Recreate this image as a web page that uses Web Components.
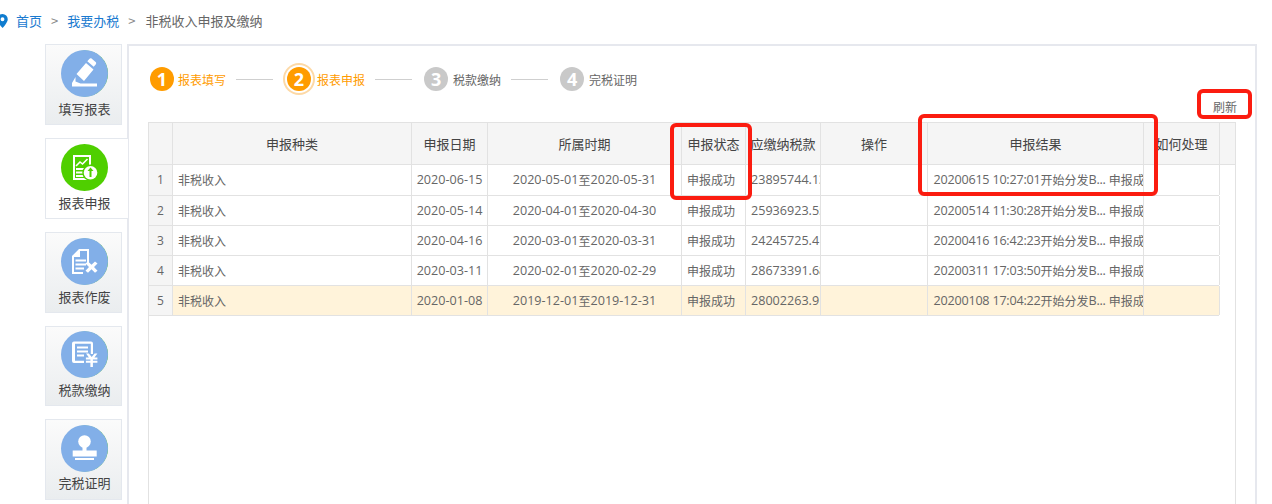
<!DOCTYPE html>
<html><head><meta charset="utf-8">
<style>
html,body{margin:0;padding:0;background:#fff;overflow:hidden}
body{width:1272px;height:504px;font-family:"Open Sans","Noto Sans CJK SC",sans-serif;font-size:12px;color:#666}
</style></head><body>
<tax-page></tax-page>
<script>
const FONT='"Noto Sans CJK SC","Microsoft YaHei",sans-serif';
class TaxCrumb extends HTMLElement{connectedCallback(){this.attachShadow({mode:'open'}).innerHTML=`<style>
:host{display:flex;align-items:center;height:44px;box-sizing:border-box;padding-bottom:3px;font:13px ${FONT};color:#666;margin-left:-3px}
svg{width:11px;height:14px;margin-right:8px;flex:none}
a{color:#1a7ad0}i{font-style:normal;color:#888;margin:0 9px}
i+a+i{margin-right:10px}
</style><svg viewBox="0 0 12 16"><path fill="#0f7ccf" d="M6 0a6 6 0 0 0-6 6c0 4 6 10 6 10s6-6 6-10a6 6 0 0 0-6-6zm0 8.200a2.200 2.200 0 1 1 0-4.400 2.200 2.200 0 0 1 0 4.400z"/></svg><a>首页</a><i>&gt;</i><a>我要办税</a><i>&gt;</i><span>非税收入申报及缴纳</span>`}}
customElements.define('tax-crumb',TaxCrumb);

const ICONS={
pen:`<path fill="#fff" d="M15.500 24L25 13 32.500 19.500 23 31zM26.300 11.200l2-2.300c.8-.8 1.800-.8 2.500-.2l3.800 3.300c.7.600.8 1.600.1 2.400l-2 2.300zM14.500 27v4.500L19.500 33.500H36V36.500H11V33z"/>`,
chart:`<g fill="none" stroke="#fff"><rect x="13" y="12" width="16" height="23" stroke-width="2"/><path stroke-width="1.600" d="M15 22l4-4 2.500 2 5-5"/></g><path fill="#fff" d="M15 24h12v2H15zm0 3.500h9v2h-9zm0 3.500h9v2h-9z"/><circle cx="29.500" cy="28.700" r="8.200" fill="#4fcf00"/><circle cx="29.500" cy="28.700" r="6.800" fill="#fff"/><path fill="#4fcf00" d="M29.500 23.500l3 3.500h-2v6h-2v-6h-2z"/>`,
cancel:`<path fill="#fff" fill-rule="evenodd" d="M18 11h10v14h-2V13h-7v6h-6v15h9v2H11V18zM14.500 21.500H25v2H14.500zm0 4H25v2H14.500zm0 4H23v2h-8.500z"/><path fill="#fff" d="M24.500 25.500l2.500-2 3.500 3.200 3.500-3.200 2.500 2-3.500 3.500 3.500 3.700-2.500 2-3.500-3.500-3.500 3.500-2.500-2 3.500-3.700z"/>`,
yen:`<path fill="#fff" fill-rule="evenodd" d="M13 10.500h17a2 2 0 0 1 2 2V23h-2.200V12.700H14v17h9V32H13a2 2 0 0 1-2-2V12.500a2 2 0 0 1 2-2z"/><path fill="#fff" d="M16 15.500h11v2H16zm0 4h11v2H16zm0 4h7v2h-7zM25 22.500h2.800l2.900 3.500 2.900-3.500h2.800l-3 4h3v2h-4.500v1.200h4.500v2h-4.500V36h-2.500v-4.300h-4.500v-2h4.500v-1.200h-4.500v-2h3z"/>`,
stamp:`<circle cx="23.500" cy="16.500" r="6.300" fill="#fff"/><path fill="#fff" d="M21.500 21h4v5h-4zM11.700 25.500h24v6h-24zM14 33h19v2H14z"/>`};
class TaxTab extends HTMLElement{connectedCallback(){const on=this.hasAttribute('active'),p=this.getAttribute('pad')||5,g=this.getAttribute('gap')||3;this.attachShadow({mode:'open'}).innerHTML=`<style>
:host{display:block;box-sizing:border-box;width:${on?'83px':'77px'};height:${this.getAttribute('h')||81}px;border:1px solid #e4e8ee;${on?'border-right:0;background:#fff;':'background:linear-gradient(#fbfbfb,#eaedef);'}text-align:center;font:13px/18px ${FONT};color:#444;padding-top:${p}px;flex:none;position:relative;z-index:1}
svg{display:block;width:48px;height:47px;margin:0 0 ${g}px 15px}
</style><svg viewBox="0 0 48 47">${on?'':'<circle cx="24" cy="23.500" r="23" fill="#4fcf00"/>'}<circle cx="23.500" cy="23.500" r="23.500" fill="${on?'#4fcf00':'#82afe8'}"/>${ICONS[this.getAttribute('icon')]}</svg><div style="width:77px"><slot></slot></div>`}}
customElements.define('tax-tab',TaxTab);

class TaxStep extends HTMLElement{connectedCallback(){const s=this.getAttribute('state'),on=s!=='todo',cur=s==='current';this.attachShadow({mode:'open'}).innerHTML=`<style>
:host{display:flex;align-items:center;height:24px;font:12px ${FONT};color:${on?'#ff9c00':'#666'}}
b{display:flex;align-items:center;justify-content:center;width:24px;height:24px;border-radius:50%;background:${on?'#ff9c00':'#c9c9c9'};color:#fff;font:bold 18px "Open Sans",sans-serif;${cur?'box-shadow:0 0 0 2px #fff,0 0 0 4px #fdd9a6;':''}margin-right:${this.getAttribute('gap')||5}px;flex:none}
</style><b>${this.getAttribute('n')}</b><slot></slot>`}}
customElements.define('tax-step',TaxStep);

const COLS=[24,239,76,194,64,75,107,216,76,17];
const HEAD=['','申报种类','申报日期','所属时期','申报状态','应缴纳税款','操作','申报结果','如何处理',''];
const ROWS=[
['1','非税收入','2020-06-15','2020-05-01至2020-05-31','申报成功','23895744.13','','20200615 10:27:01开始分发B... 申报成功',''],
['2','非税收入','2020-05-14','2020-04-01至2020-04-30','申报成功','25936923.55','','20200514 11:30:28开始分发B... 申报成功',''],
['3','非税收入','2020-04-16','2020-03-01至2020-03-31','申报成功','24245725.41','','20200416 16:42:23开始分发B... 申报成功',''],
['4','非税收入','2020-03-11','2020-02-01至2020-02-29','申报成功','28673391.68','','20200311 17:03:50开始分发B... 申报成功',''],
['5','非税收入','2020-01-08','2019-12-01至2019-12-31','申报成功','28002263.9','','20200108 17:04:22开始分发B... 申报成功','']];
const ALIGN=['ctr','lft','ctr','ctr','lft','lft','ctr','lft res','ctr'];
const cjk=t=>t.replace(/[\u4e00-\u9fff]+/g,m=>`<span class="z">${m}</span>`);
class TaxGrid extends HTMLElement{connectedCallback(){
const tpl=COLS.map(w=>w+'px').join(' ');
const head=HEAD.map(t=>`<div class="c">${t}</div>`).join('');
const rows=ROWS.map((r,ri)=>`<div class="r ${ri==4?'hl':''} ${ri==0?'first':''}">`+r.map((t,i)=>`<div class="c ${i==0?'n':''} ${ALIGN[i]}">${cjk(t)}</div>`).join('')+`</div>`).join('');
this.attachShadow({mode:'open'}).innerHTML=`<style>
:host{display:block;width:1088px;box-sizing:border-box;border:solid #e2e2e2;border-width:1px 1px 0 1px;height:382px;font:12.600px "Open Sans","Noto Sans CJK SC",sans-serif;color:#666}
.hd{display:grid;grid-template-columns:${tpl};height:41px;background:#f5f5f5;border-bottom:1px solid #e2e2e2;font:13px ${FONT};color:#444}
.r{display:grid;grid-template-columns:${COLS.slice(0,-1).map(w=>w+'px').join(' ')};height:30px;box-sizing:border-box;border-bottom:1px solid #e2e2e2;width:1070px}
.r.first{height:31px}
.c{box-sizing:border-box;border-right:1px solid #e2e2e2;display:flex;align-items:center;overflow:hidden;white-space:pre;min-width:0}
.hd .c{justify-content:center}
.hd .c:last-child{border-right:0}
.r .c{padding-bottom:1px}
.r .lft{justify-content:flex-start;padding-left:5px}
.r .res{letter-spacing:-.22px;padding-left:5.500px}
.r .ctr{justify-content:center}
.r .n{background:#f5f5f5;font-size:12px}
.z{font:12px ${FONT};letter-spacing:0}
.hl .c:not(.n){background:#fff3da}
</style><div class="hd">${head}</div>${rows}`}}
customElements.define('tax-grid',TaxGrid);

class TaxMark extends HTMLElement{connectedCallback(){const[x,y,w,h]=this.getAttribute('box').split(',');this.attachShadow({mode:'open'}).innerHTML=`<style>
:host{position:absolute;left:${x}px;top:${y}px;width:${w}px;height:${h}px;box-sizing:border-box;border:4px solid #fb1c10;border-radius:6px;z-index:5;pointer-events:none}
</style>`}}
customElements.define('tax-mark',TaxMark);

class TaxPanel extends HTMLElement{connectedCallback(){this.attachShadow({mode:'open'}).innerHTML=`<style>
:host{display:block;box-sizing:border-box;width:1130px;height:460px;border:solid #e6e8ee;border-width:2px 2px 0 2px;margin-left:-1px;padding:21px 0 0 19px;flex:none}
.steps{display:flex;align-items:center;height:24px;padding-left:2px}
.line{width:37px;height:1px;background:#cfcfcf;margin:0 12px 0 10px}
.line.w{margin-right:14px}
.bar{display:flex;justify-content:flex-end;align-items:center;height:31px;padding-right:18px;font:12px ${FONT};color:#666}
</style><div class="steps"><tax-step n="1" state="done" gap="4">报表填写</tax-step><div class="line w"></div><tax-step n="2" state="current" gap="6">报表申报</tax-step><div class="line"></div><tax-step n="3" state="todo">税款缴纳</tax-step><div class="line"></div><tax-step n="4" state="todo">完税证明</tax-step></div><div class="bar"><span>刷新</span></div><tax-grid></tax-grid>`}}
customElements.define('tax-panel',TaxPanel);

class TaxPage extends HTMLElement{connectedCallback(){this.attachShadow({mode:'open'}).innerHTML=`<style>
:host{display:block;position:relative;width:1272px;height:504px;overflow:hidden}
.main{display:flex;padding-left:45px}
.side{display:flex;flex-direction:column;gap:13px;width:83px;flex:none}
</style><tax-crumb></tax-crumb><div class="main"><div class="side"><tax-tab icon="pen">填写报表</tax-tab><tax-tab icon="chart" active>报表申报</tax-tab><tax-tab icon="cancel">报表作废</tax-tab><tax-tab icon="yen" h="80" pad="4">税款缴纳</tax-tab><tax-tab icon="stamp" gap="2">完税证明</tax-tab></div><tax-panel></tax-panel></div>
<tax-mark box="670,123,82,77"></tax-mark><tax-mark box="918,114,240,82"></tax-mark><tax-mark box="1197,89,55,30"></tax-mark>`}}
customElements.define('tax-page',TaxPage);
</script></body></html>
